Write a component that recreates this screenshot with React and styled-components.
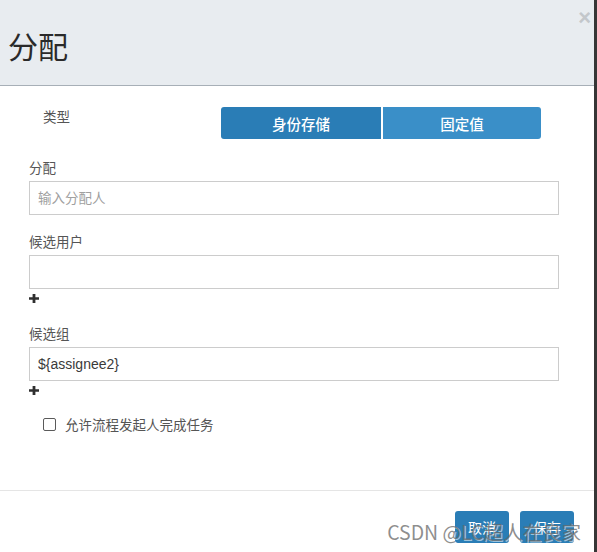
import React from "react";
import styled, { createGlobalStyle } from "styled-components";

const Global = createGlobalStyle`
  html, body { margin: 0; padding: 0; background: #363636; }
  body { font-family: "Noto Sans CJK SC", "Noto Sans", sans-serif; }
  * { box-sizing: border-box; }
`;

const Dialog = styled.div`
  position: relative;
  width: 594px;
  height: 552px;
  background: #fff;
  overflow: hidden;
`;

const Header = styled.div`
  height: 86px;
  background: #e8ecf0;
  border-bottom: 1px solid #a7afb7;
  padding-left: 8px;
  display: flex;
  align-items: center;
`;

const Title = styled.h1`
  margin: 4px 0 0 0;
  font-size: 30px;
  font-weight: 400;
  color: #2a2a2a;
  line-height: 1;
`;

const Close = styled.button`
  position: absolute;
  top: 7px;
  right: 3px;
  border: 0;
  background: none;
  padding: 0;
  font-family: "Liberation Sans", sans-serif;
  font-size: 22px;
  font-weight: 700;
  line-height: 1;
  color: #c3c7cb;
`;

const Body = styled.div`
  height: 404px;
  padding: 21px 35px 0 29px;
  display: flex;
  flex-direction: column;
`;

const TypeRow = styled.div`
  display: flex;
  align-items: flex-start;
  height: 32px;
`;

const TypeLabel = styled.div`
  width: 192px;
  padding-left: 14px;
  font-size: 13.5px;
  line-height: 18px;
  color: #555;
`;

const Segmented = styled.div`
  display: flex;
  gap: 2px;
  width: 320px;
`;

const Segment = styled.button`
  flex: ${(p) => (p.$first ? "0 0 160px" : "1")};
  height: 32px;
  border: 0;
  margin: 0;
  padding: 0;
  color: #fff;
  font-family: "Noto Sans CJK SC", sans-serif;
  font-size: 14.5px;
  font-weight: 500;
  background: ${(p) => (p.$active ? "#2a7db6" : "#3a8fc8")};
  border-radius: ${(p) => (p.$first ? "3px 0 0 3px" : "0 3px 3px 0")};
`;

const Group = styled.div`
  margin-top: ${(p) => p.$top}px;
  display: flex;
  flex-direction: column;
  gap: 4px;
`;

const Label = styled.label`
  font-size: 13.5px;
  line-height: 20px;
  color: #555;
`;

const Input = styled.input`
  width: 100%;
  height: 34px;
  margin: 0;
  border: 1px solid #cccccc;
  border-radius: 0;
  padding: 0 8px;
  font-family: "Liberation Sans", "Noto Sans CJK SC", sans-serif;
  font-size: 14px;
  color: #3a3a3a;
  outline: none;
  &::placeholder {
    font-family: "Noto Sans CJK SC", sans-serif;
    font-size: 13.5px;
    color: #a0a0a0;
  }
`;

const AddButton = styled.button`
  align-self: flex-start;
  margin-top: 1px;
  border: 0;
  background: none;
  padding: 0;
  display: block;
  line-height: 0;
  color: #2f2f2f;
`;

const CheckRow = styled.label`
  margin-top: 21px;
  padding-left: 14px;
  display: flex;
  align-items: center;
  gap: 9px;
  font-size: 13.5px;
  line-height: 16px;
  color: #555;
`;

const Check = styled.input`
  appearance: none;
  margin: 0;
  width: 13px;
  height: 13px;
  border: 1px solid #5a5a5a;
  border-radius: 2px;
  background: #fff;
`;

const Footer = styled.div`
  border-top: 1px solid #e5e5e5;
  padding: 20px 20px;
  display: flex;
  justify-content: flex-end;
  gap: 11px;
`;

const ActionButton = styled.button`
  width: 54px;
  height: 32px;
  border: 0;
  border-radius: 3px;
  background: #2a7db6;
  color: #fff;
  font-family: "Noto Sans CJK SC", sans-serif;
  font-size: 14px;
  padding: 0;
`;

const Watermark = styled.div`
  position: absolute;
  right: 13px;
  bottom: 7px;
  font-family: "Noto Sans CJK SC", sans-serif;
  font-size: 19.5px;
  line-height: 26px;
  color: rgba(105, 105, 105, 0.75);
  text-shadow: 1px 1px 0 rgba(255, 255, 255, 0.55);
  white-space: nowrap;
  pointer-events: none;
`;

const PlusIcon = () => (
  <svg width="10" height="9" viewBox="0 0 10 9" aria-hidden="true">
    <path d="M3.6 0h2.8v3.2H10v2.6H6.4V9H3.6V5.8H0V3.2h3.6z" fill="currentColor" />
  </svg>
);

export default function App() {
  return (
    <>
      <Global />
      <Dialog>
        <Header>
          <Title>分配</Title>
        </Header>
        <Close aria-label="close">×</Close>
        <Body>
          <TypeRow>
            <TypeLabel>类型</TypeLabel>
            <Segmented>
              <Segment $first $active>身份存储</Segment>
              <Segment>固定值</Segment>
            </Segmented>
          </TypeRow>

          <Group $top={18}>
            <Label>分配</Label>
            <Input placeholder="输入分配人" />
          </Group>

          <Group $top={16}>
            <Label>候选用户</Label>
            <Input />
            <AddButton><PlusIcon /></AddButton>
          </Group>

          <Group $top={20}>
            <Label>候选组</Label>
            <Input defaultValue="${assignee2}" />
            <AddButton><PlusIcon /></AddButton>
          </Group>

          <CheckRow>
            <Check type="checkbox" />
            允许流程发起人完成任务
          </CheckRow>
        </Body>
        <Footer>
          <ActionButton>取消</ActionButton>
          <ActionButton>保存</ActionButton>
        </Footer>
        <Watermark>CSDN @LC超人在良家</Watermark>
      </Dialog>
    </>
  );
}
